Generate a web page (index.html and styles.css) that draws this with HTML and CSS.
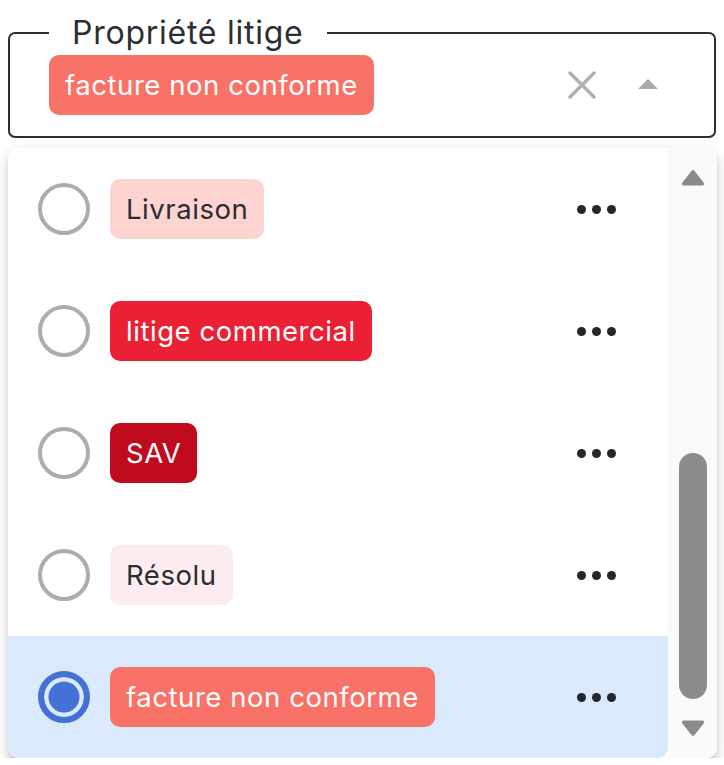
FILE: index.html
```html
<!DOCTYPE html>
<html lang="fr">
<head>
<meta charset="utf-8">
<title>Propriété litige</title>
<link rel="stylesheet" href="styles.css">
</head>
<body>
<div class="page">
  <fieldset class="field">
    <legend class="field-label">Propriété litige</legend>
    <div class="field-row">
      <span class="chip chip-facture">facture non conforme</span>
      <div class="field-actions">
        <svg class="icon-clear" width="28" height="28" viewBox="0 0 28 28"><path d="M2 2 L26 26 M26 2 L2 26" stroke="#b0b0b0" stroke-width="3.5" stroke-linecap="round" fill="none"/></svg>
        <svg class="icon-caret" width="20" height="10" viewBox="0 0 20 10"><path d="M0 10 L10 0 L20 10 Z" fill="#a9a9a9"/></svg>
      </div>
    </div>
  </fieldset>

  <div class="menu">
    <ul class="options">
      <li class="option">
        <span class="radio"></span>
        <span class="chip chip-livraison">Livraison</span>
        <span class="more"><i></i><i></i><i></i></span>
      </li>
      <li class="option">
        <span class="radio"></span>
        <span class="chip chip-commercial">litige commercial</span>
        <span class="more"><i></i><i></i><i></i></span>
      </li>
      <li class="option">
        <span class="radio"></span>
        <span class="chip chip-sav">SAV</span>
        <span class="more"><i></i><i></i><i></i></span>
      </li>
      <li class="option">
        <span class="radio"></span>
        <span class="chip chip-resolu">Résolu</span>
        <span class="more"><i></i><i></i><i></i></span>
      </li>
      <li class="option selected">
        <span class="radio checked"></span>
        <span class="chip chip-facture">facture non conforme</span>
        <span class="more"><i></i><i></i><i></i></span>
      </li>
    </ul>
    <div class="scrollbar">
      <svg class="sb-arrow" width="24" height="17" viewBox="0 0 24 17"><path d="M10.3 2.2 Q12 0 13.7 2.2 L22.6 13.6 Q24 16.5 21 16.5 L3 16.5 Q0 16.5 1.4 13.6 Z" fill="#8a8a8a"/></svg>
      <div class="sb-track"><div class="sb-thumb"></div></div>
      <svg class="sb-arrow" width="24" height="17" viewBox="0 0 24 17"><path d="M10.3 14.8 Q12 17 13.7 14.8 L22.6 3.4 Q24 0.5 21 0.5 L3 0.5 Q0 0.5 1.4 3.4 Z" fill="#8a8a8a"/></svg>
    </div>
  </div>
</div>
</body>
</html>
```

FILE: styles.css
```css
* { box-sizing: border-box; }

html, body {
  margin: 0;
  padding: 0;
  background: #ffffff;
  font-family: "Inter", "Noto Sans", "Liberation Sans", sans-serif;
  color: #2a2d33;
}

.page {
  width: 724px;
  padding: 15px 8px 0 8px;
}

.field {
  margin: 0;
  width: 708px;
  border: 2px solid #2b2e33;
  border-radius: 7px;
  padding: 4px 56px 21px 39px;
  min-width: 0;
}

.field-label {
  padding: 0 23px 0 23px;
  font-size: 32px;
  line-height: 36px;
  letter-spacing: 0.75px;
  color: #2b2e33;
  font-weight: 400;
}

.field-row {
  display: flex;
  align-items: center;
}

.field-actions {
  margin-left: auto;
  display: flex;
  align-items: center;
  gap: 42px;
}

.icon-clear { display: block; }
.icon-caret { display: block; margin-top: -2px; }

.chip {
  display: inline-flex;
  align-items: center;
  height: 60px;
  padding: 0 16px;
  border-radius: 10px;
  font-size: 27.5px;
  letter-spacing: 0.55px;
  white-space: nowrap;
}

.chip-facture { background: #f87268; color: #ffffff; }
.chip-livraison { background: #fdd4d0; color: #2a2d33; }
.chip-commercial { background: #ec2034; color: #ffffff; }
.chip-sav { background: #bf0b1d; color: #ffffff; }
.chip-resolu { background: #fdeced; color: #2a2d33; }

.menu {
  margin-top: 10px;
  width: 709px;
  height: 610px;
  display: flex;
  border-radius: 10px;
  overflow: hidden;
  background: #ffffff;
  box-shadow: 0 5px 5px -3px rgba(0,0,0,0.16), 0 8px 10px 1px rgba(0,0,0,0.1), 0 3px 14px 2px rgba(0,0,0,0.08);
}

.options {
  list-style: none;
  margin: 0;
  padding: 0;
  flex: 1;
  display: flex;
  flex-direction: column;
}

.option {
  height: 122px;
  display: flex;
  align-items: center;
  padding: 0 52px 0 30px;
}

.option.selected {
  background: #dbe9fd;
  border-radius: 0 0 10px 10px;
}

.radio {
  width: 52px;
  height: 52px;
  border-radius: 50%;
  border: 4.5px solid #adadad;
  margin-right: 20px;
  flex: none;
}

.radio.checked {
  border: 6px solid #4471d4;
  background: #4471d4;
  box-shadow: inset 0 0 0 4.5px #dbe9fd;
}

.more {
  margin-left: auto;
  display: flex;
  gap: 6px;
}

.more i {
  width: 9px;
  height: 9px;
  border-radius: 50%;
  background: #23262c;
  display: block;
}

.scrollbar {
  width: 49px;
  background: #fafafa;
  display: flex;
  flex-direction: column;
  align-items: center;
  padding: 21px 0;
}

.sb-arrow { display: block; flex: none; }

.sb-track {
  flex: 1;
  display: flex;
  flex-direction: column;
  justify-content: flex-end;
  padding-bottom: 21px;
}

.sb-thumb {
  width: 28px;
  height: 246px;
  border-radius: 14px;
  background: #8c8c8c;
}
```
